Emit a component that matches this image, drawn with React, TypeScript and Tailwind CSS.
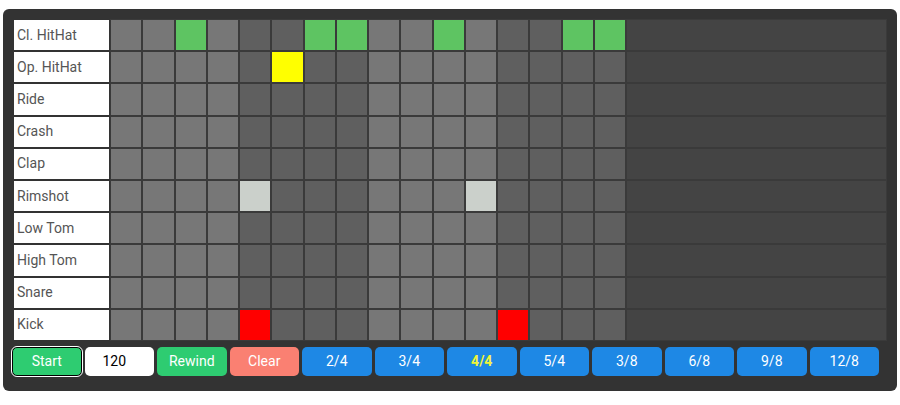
import React from "react";

const rows: { name: string; on: Record<number, string> }[] = [
  { name: "Cl. HitHat", on: { 3: "bg-[#5ec462]", 7: "bg-[#5ec462]", 8: "bg-[#5ec462]", 11: "bg-[#5ec462]", 15: "bg-[#5ec462]", 16: "bg-[#5ec462]" } },
  { name: "Op. HitHat", on: { 6: "bg-[#ffff00]" } },
  { name: "Ride", on: {} },
  { name: "Crash", on: {} },
  { name: "Clap", on: {} },
  { name: "Rimshot", on: { 5: "bg-[#cbd0cb]", 12: "bg-[#cbd0cb]" } },
  { name: "Low Tom", on: {} },
  { name: "High Tom", on: {} },
  { name: "Snare", on: {} },
  { name: "Kick", on: { 5: "bg-[#ff0000]", 13: "bg-[#ff0000]" } },
];

const meters = ["2/4", "3/4", "4/4", "5/4", "3/8", "6/8", "9/8", "12/8"];

export default function App() {
  return (
    <div className="w-[900px] h-[405px] bg-white pt-[9px] pl-[3px]" style={{ fontFamily: "Roboto, 'Liberation Sans', sans-serif" }}>
      <div className="w-[894px] h-[382px] bg-[#333333] rounded-[6px] pt-[10px] pl-[10px] pr-[10px]">
        <div className="flex flex-col">
          {rows.map((r) => (
            <div key={r.name} className="flex h-[32.2px]">
              <div className="w-[97px] h-full bg-white border border-[#333] flex items-center pl-[3px] text-[14px] text-[#555]">
                {r.name}
              </div>
              {Array.from({ length: 16 }, (_, i) => {
                const n = i + 1;
                const light = Math.floor(i / 4) % 2 === 0;
                const cls = r.on[n] ?? (light ? "bg-[#777777]" : "bg-[#5f5f5f]");
                return <div key={n} className={`w-[32.25px] h-full border border-[#3a3a3a] ${cls}`} />;
              })}
              <div className="flex-1 h-full bg-[#444444] border border-[#3a3a3a]" />
            </div>
          ))}
        </div>
        <div className="flex gap-[3px] mt-[6px] ml-[-1px] text-[14px] text-white">
          <button className="w-[69.5px] h-[29px] rounded-[5px] bg-[#2ecc71] border border-black outline outline-1 outline-white">Start</button>
          <input readOnly value="120" className="w-[69.5px] h-[29px] rounded-[5px] bg-white text-black pl-[18px] text-[14px] outline-none" />
          <button className="w-[69.5px] h-[29px] rounded-[5px] bg-[#2ecc71]">Rewind</button>
          <button className="w-[69.5px] h-[29px] rounded-[5px] bg-[#fa8072]">Clear</button>
          {meters.map((m) => (
            <button key={m} className={`w-[69.5px] h-[29px] rounded-[5px] bg-[#1e88e5] ${m === "4/4" ? "text-[#f0f53a] font-bold" : ""}`}>{m}</button>
          ))}
        </div>
      </div>
    </div>
  );
}
